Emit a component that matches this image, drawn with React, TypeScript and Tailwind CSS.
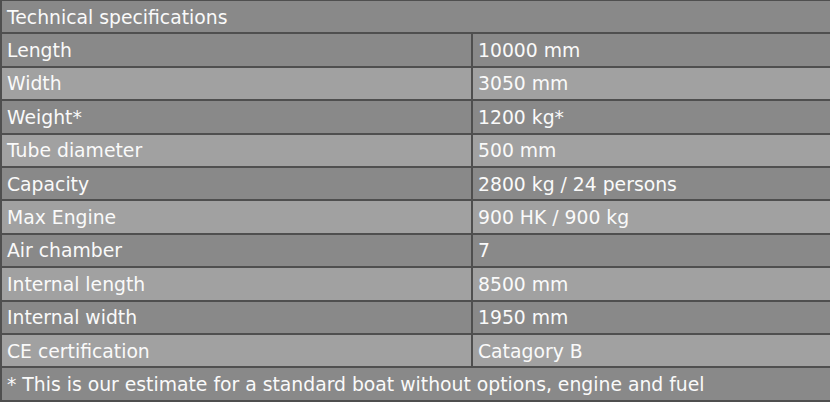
import React from "react";

const rows: [string, string][] = [
  ["Length", "10000 mm"],
  ["Width", "3050 mm"],
  ["Weight*", "1200 kg*"],
  ["Tube diameter", "500 mm"],
  ["Capacity", "2800 kg / 24 persons"],
  ["Max Engine", "900 HK / 900 kg"],
  ["Air chamber", "7"],
  ["Internal length", "8500 mm"],
  ["Internal width", "1950 mm"],
  ["CE certification", "Catagory B"],
];

export default function App() {
  return (
    <div
      className="w-[830px] h-[402px] bg-[#898989] text-[#fafafa] text-[18.8px] overflow-hidden border-t border-l-2 border-[#4f4f4f]"
      style={{ fontFamily: '"DejaVu Sans", sans-serif' }}
    >
      <div className="h-[33.4px] border-b-2 border-[#4f4f4f] bg-[#898989] flex items-center pl-[5px] pt-[2px]">
        Technical specifications
      </div>
      {rows.map(([k, v], i) => (
        <div
          key={k}
          className={`h-[33.4px] border-b-2 border-[#4f4f4f] flex ${i % 2 === 0 ? "bg-[#898989]" : "bg-[#a1a1a1]"}`}
        >
          <div className="w-[471px] shrink-0 flex items-center pl-[5px] pt-[2px] border-r-2 border-[#4f4f4f]">{k}</div>
          <div className="flex-1 flex items-center pl-[5px] pt-[2px]">{v}</div>
        </div>
      ))}
      <div className="h-[33.4px] border-b-2 border-[#4f4f4f] bg-[#898989] flex items-center pl-[5px] pt-[2px]">
        * This is our estimate for a standard boat without options, engine and fuel
      </div>
    </div>
  );
}
